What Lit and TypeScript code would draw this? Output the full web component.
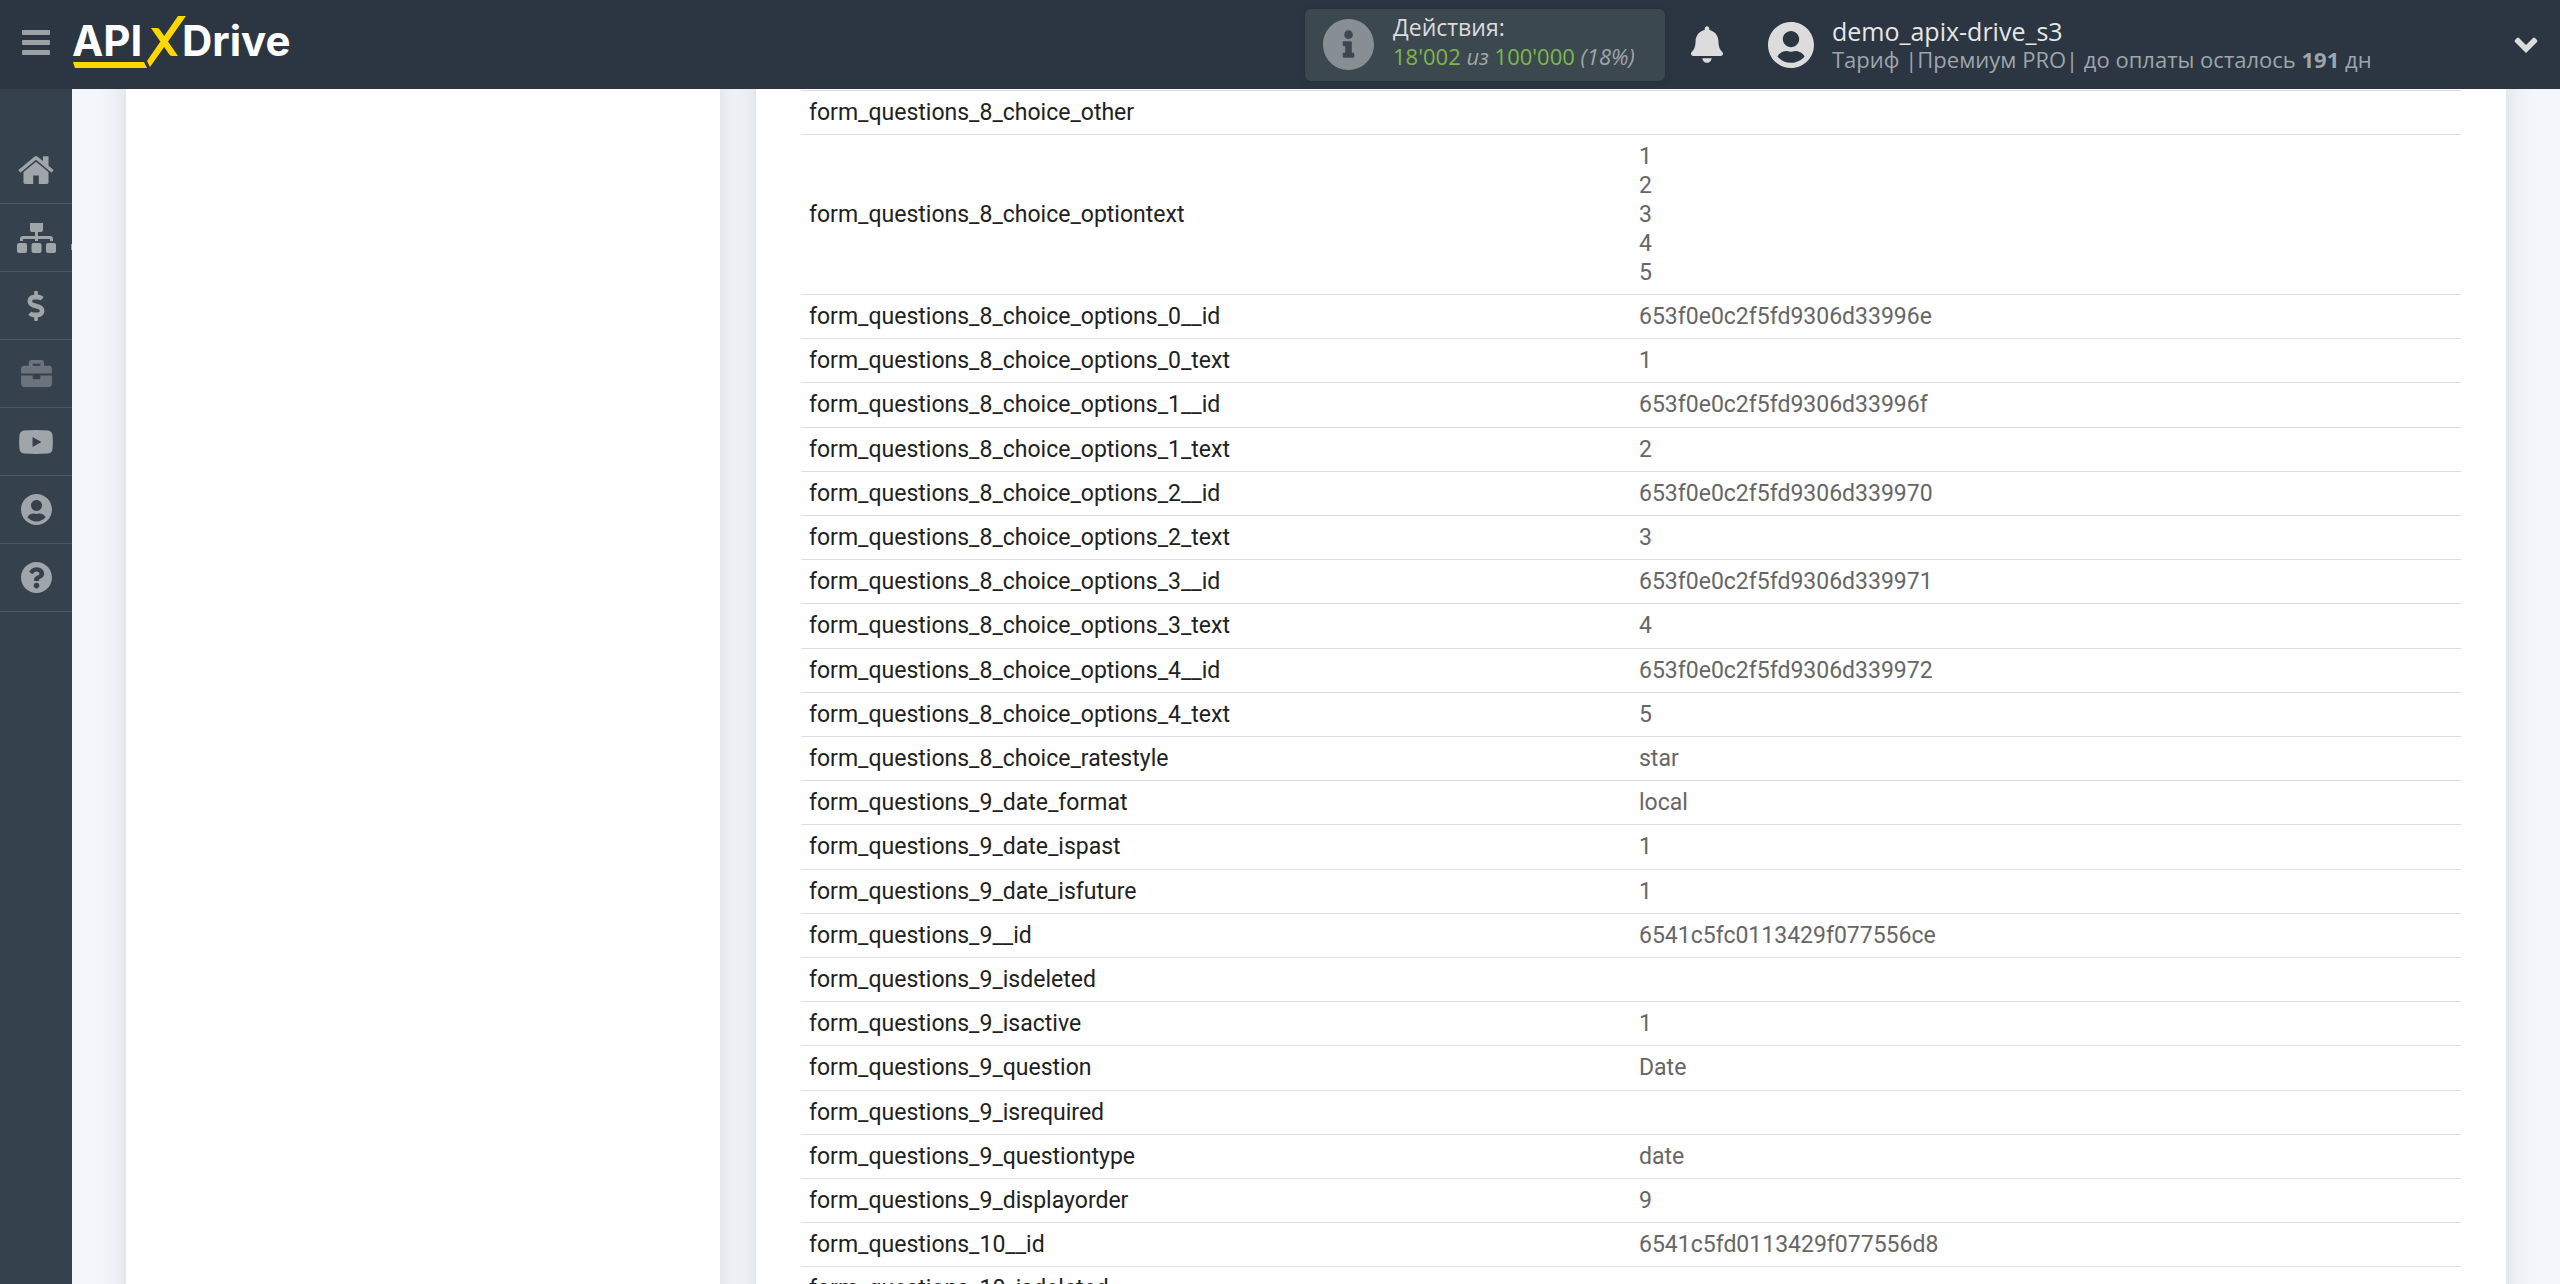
import { LitElement, html, css, svg, nothing } from "lit";
import { customElement } from "lit/decorators.js";

interface NavItem {
  label: string;
  icon: unknown;
  box: string;
  width: number;
  height: number;
  muted?: boolean;
  submenu?: boolean;
}

interface Field {
  name: string;
  value: string[];
}

const USER_PATH =
  "M248 8C111 8 0 119 0 256s111 248 248 248 248-111 248-248S385 8 248 8zm0 96c48.6 0 88 39.4 88 88s-39.4 88-88 88-88-39.4-88-88 39.4-88 88-88zm0 344c-58.7 0-111.3-26.6-146.5-68.2 18.8-35.4 55.6-59.8 98.5-59.8 2.4 0 4.8.4 7.1 1.1 13 4.2 26.6 6.9 40.9 6.9 14.3 0 28-2.7 40.9-6.9 2.3-.7 4.7-1.1 7.1-1.1 42.9 0 79.7 24.4 98.5 59.8C359.3 421.4 306.7 448 248 448z";

const NAV: NavItem[] = [
  {
    label: "Главная",
    box: "90 250 1612 1290",
    width: 36,
    height: 28,
    icon: svg`<path d="M1472 992v480q0 26-19 45t-45 19h-384v-384h-256v384h-384q-26 0-45-19t-19-45v-480q0-1 .5-3t.5-3l575-474 575 474q1 2 1 6zm223-69l-62 74q-8 9-21 11h-3q-13 0-21-7l-692-577-692 577q-12 8-24 7-13-2-21-11l-62-74q-8-10-7-23.5t11-21.5l719-599q32-26 76-26t76 26l244 204v-195q0-14 9-23t23-9h192q14 0 23 9t9 23v408l219 182q10 8 11 21.5t-7 23.5z"/>`,
  },
  {
    label: "Связи",
    box: "0 0 39 30",
    width: 39,
    height: 30,
    submenu: true,
    icon: svg`<path d="M13 0h13v7q0 2-2 2h-3v4h12q3 0 3 3v2h-3v-2H21v2h-3v-2H6v2H3v-2q0-3 3-3h12V9h-3q-2 0-2-2z"/><rect x="0" y="20" width="10" height="10" rx="2"/><rect x="14.500" y="20" width="10" height="10" rx="2"/><rect x="29" y="20" width="10" height="10" rx="2"/>`,
  },
  {
    label: "Оплата",
    box: "0 0 288 512",
    width: 18,
    height: 30,
    icon: svg`<path d="M209.200 233.400l-108-31.600C88.700 198.200 80 186.500 80 173.500c0-16.300 13.200-29.500 29.500-29.500h66.300c12.200 0 24.200 3.700 34.200 10.500 6.100 4.100 14.300 3.100 19.500-2l34.800-34c7.100-6.900 6.100-18.400-1.800-24.500C238 74.800 207.400 64.100 176 64V16c0-8.800-7.200-16-16-16h-32c-8.800 0-16 7.200-16 16v48h-2.500C45.800 64-5.400 118.700.5 183.600c4.200 46.100 39.400 83.600 83.800 96.600l102.500 30c12.500 3.700 21.200 15.300 21.200 28.300 0 16.300-13.200 29.500-29.500 29.500h-66.300C100 368 88 364.300 78 357.500c-6.100-4.100-14.300-3.100-19.500 2l-34.800 34c-7.100 6.900-6.100 18.400 1.800 24.500 24.500 19.200 55.100 29.900 86.500 30v48c0 8.800 7.200 16 16 16h32c8.800 0 16-7.200 16-16v-48.200c46.600-.9 90.300-28.600 105.700-72.700 21.500-61.600-14.600-124.800-72.500-141.700z"/>`,
  },
  {
    label: "Проекты",
    box: "0 32 512 448",
    width: 31,
    height: 27,
    muted: true,
    icon: svg`<path d="M320 336c0 8.840-7.160 16-16 16h-96c-8.840 0-16-7.160-16-16v-48H0v144c0 25.600 22.400 48 48 48h416c25.600 0 48-22.400 48-48V288H320v48zm144-208h-80V80c0-25.600-22.400-48-48-48H176c-25.600 0-48 22.400-48 48v48H48c-25.600 0-48 22.400-48 48v80h512v-80c0-25.600-22.400-48-48-48zm-144 0H192V96h128v32z"/>`,
  },
  {
    label: "Видео",
    box: "0 0 34 24",
    width: 34,
    height: 24,
    icon: svg`<path fill-rule="evenodd" d="M5 .5Q17-.5 29 .5Q33 1 33.500 5Q34.200 12 33.500 19Q33 23 29 23.500Q17 24.300 5 23.500Q1 23 .5 19Q-.2 12 .5 5Q1 1 5 .5zM13.500 7v10l9-5z"/>`,
  },
  {
    label: "Профиль",
    box: "0 8 496 496",
    width: 31,
    height: 31,
    icon: svg`<path d=${USER_PATH} />`,
  },
  {
    label: "Помощь",
    box: "8 8 496 496",
    width: 31,
    height: 31,
    icon: svg`<path d="M504 256c0 136.997-111.043 248-248 248S8 392.997 8 256C8 119.083 119.043 8 256 8s248 111.083 248 248zM262.655 90c-54.497 0-89.255 22.957-116.549 63.758-3.536 5.286-2.353 12.415 2.715 16.258l34.699 26.310c5.205 3.947 12.621 3.008 16.665-2.122 17.864-22.658 30.113-35.797 57.303-35.797 20.429 0 45.698 13.148 45.698 32.958 0 14.976-12.363 22.667-32.534 33.976C247.128 238.528 216 254.941 216 296v4c0 6.627 5.373 12 12 12h56c6.627 0 12-5.373 12-12v-1.333c0-28.462 83.186-29.647 83.186-106.667 0-58.002-60.165-102-116.531-102zM256 338c-25.365 0-46 20.635-46 46 0 25.364 20.635 46 46 46s46-20.636 46-46c0-25.365-20.635-46-46-46z"/>`,
  },
];

const field = (name: string, ...value: string[]): Field => ({ name: `form_questions_${name}`, value });

const FIELDS: Field[] = [
  field("8_choice_other"),
  field("8_choice_optiontext", "1", "2", "3", "4", "5"),
  field("8_choice_options_0__id", "653f0e0c2f5fd9306d33996e"),
  field("8_choice_options_0_text", "1"),
  field("8_choice_options_1__id", "653f0e0c2f5fd9306d33996f"),
  field("8_choice_options_1_text", "2"),
  field("8_choice_options_2__id", "653f0e0c2f5fd9306d339970"),
  field("8_choice_options_2_text", "3"),
  field("8_choice_options_3__id", "653f0e0c2f5fd9306d339971"),
  field("8_choice_options_3_text", "4"),
  field("8_choice_options_4__id", "653f0e0c2f5fd9306d339972"),
  field("8_choice_options_4_text", "5"),
  field("8_choice_ratestyle", "star"),
  field("9_date_format", "local"),
  field("9_date_ispast", "1"),
  field("9_date_isfuture", "1"),
  field("9__id", "6541c5fc0113429f077556ce"),
  field("9_isdeleted"),
  field("9_isactive", "1"),
  field("9_question", "Date"),
  field("9_isrequired"),
  field("9_questiontype", "date"),
  field("9_displayorder", "9"),
  field("10__id", "6541c5fd0113429f077556d8"),
  field("10_isdeleted"),
];

@customElement("app-header")
export class AppHeader extends LitElement {
  static styles = css`
    :host {
      display: flex;
      align-items: center;
      height: 89px;
      padding: 0 20px;
      box-sizing: border-box;
      background: #2b3642;
      color: #dcdcdc;
      font-family: "Open Sans", "Noto Sans", sans-serif;
      font-size: 22px;
      line-height: 28px;
    }
    svg {
      display: block;
      fill: currentColor;
    }
    button {
      display: block;
      padding: 0;
      border: 0;
      background: none;
      color: inherit;
      font: inherit;
      text-align: left;
      cursor: pointer;
    }
    .brand {
      display: flex;
      align-items: center;
      gap: 20px;
      padding-bottom: 5px;
    }
    .menu {
      padding: 0 2px;
      color: #9ba1a6;
    }
    .logo-text {
      font-family: Inter, "Open Sans", sans-serif;
      font-size: 42px;
      font-weight: 700;
      fill: #fff;
    }
    .logo-mark {
      fill: #ffd800;
    }
    .right {
      display: flex;
      align-items: center;
      flex: 0 1 1233px;
      margin-left: auto;
      padding-right: 2px;
      white-space: nowrap;
    }
    .usage {
      display: flex;
      align-items: center;
      gap: 19px;
      width: 360px;
      height: 72px;
      padding: 0 18px;
      box-sizing: border-box;
      border-radius: 6px;
      background: #3c4850;
      box-shadow: 0 0 8px rgba(0, 0, 0, 0.12);
    }
    .usage-icon {
      color: #878e94;
    }
    .usage-text {
      padding-bottom: 5px;
      line-height: 29px;
    }
    .usage-title {
      font-size: 23px;
    }
    .usage-numbers {
      color: #a0a5a9;
      font-style: italic;
    }
    .count {
      color: #7db84a;
      font-style: normal;
    }
    .bell {
      margin-left: 26px;
    }
    .account {
      display: flex;
      align-items: center;
      gap: 18px;
      margin-left: 45px;
    }
    .user {
      color: #e6e6e6;
      font-size: 25px;
    }
    .plan {
      color: #9fa5aa;
    }
    .expand {
      margin-left: auto;
    }
  `;

  render() {
    return html`
      <div class="brand">
        <button class="menu" aria-label="Меню">
          <svg width="28" height="25" viewBox="0 0 28 25">
            <rect width="28" height="5" rx="1" />
            <rect y="10" width="28" height="5" rx="1" />
            <rect y="20" width="28" height="5" rx="1" />
          </svg>
        </button>
        <a class="logo" href="#" aria-label="APIXDrive">
          <svg width="224" height="56" viewBox="72 14 224 56">
            <text class="logo-text" x="72" y="56">API</text>
            <text class="logo-text" x="182" y="56">Drive</text>
            <path
              class="logo-mark"
              d="M73 62h71l3 6H75zM178 16h8L150 67l-3-6zM151 28h6q2 0 3 2l18 26h-6q-2 0-3-2z"
            />
          </svg>
        </a>
      </div>
      <div class="right">
        <div class="usage">
          <svg class="usage-icon" width="51" height="51" viewBox="8 8 496 496">
            <path
              d="M256 8C119.043 8 8 119.083 8 256c0 136.997 111.043 248 248 248s248-111.003 248-248C504 119.083 392.957 8 256 8zm0 110c23.196 0 42 18.804 42 42s-18.804 42-42 42-42-18.804-42-42 18.804-42 42-42zm56 254c0 6.627-5.373 12-12 12h-88c-6.627 0-12-5.373-12-12v-24c0-6.627 5.373-12 12-12h12v-64h-12c-6.627 0-12-5.373-12-12v-24c0-6.627 5.373-12 12-12h64c6.627 0 12 5.373 12 12v100h12c6.627 0 12 5.373 12 12v24z"
            />
          </svg>
          <div class="usage-text">
            <div class="usage-title">Действия:</div>
            <div class="usage-numbers">
              <span class="count">18'002</span> из <span class="count">100'000</span> (18%)
            </div>
          </div>
        </div>
        <button class="bell" aria-label="Уведомления">
          <svg width="32" height="37" viewBox="0 0 448 512">
            <path
              d="M224 512c35.320 0 63.970-28.650 63.970-64H160.030c0 35.350 28.650 64 63.970 64zm215.390-149.710c-19.320-20.760-55.470-51.990-55.470-154.290 0-77.700-54.480-139.900-127.940-155.160V32c0-17.670-14.320-32-31.980-32s-31.980 14.330-31.980 32v20.840C118.560 68.100 64.080 130.300 64.080 208c0 102.300-36.150 133.530-55.470 154.290-6 6.450-8.660 14.160-8.610 21.710.11 16.400 12.980 32 32.100 32h383.800c19.120 0 32-15.600 32.100-32 .05-7.550-2.610-15.270-8.610-21.710z"
            />
          </svg>
        </button>
        <button class="account">
          <svg width="46" height="46" viewBox="0 8 496 496"><path d=${USER_PATH} /></svg>
          <div>
            <div class="user">demo_apix-drive_s3</div>
            <div class="plan">Тариф |Премиум PRO| до оплаты осталось <b>191</b> дн</div>
          </div>
        </button>
        <button class="expand" aria-label="Развернуть">
          <svg width="24" height="16" viewBox="0 0 24 16">
            <path d="M12 16L1 5Q0 4 1 3L3 1Q4 0 5 1L12 8L19 1Q20 0 21 1L23 3Q24 4 23 5z" />
          </svg>
        </button>
      </div>
    `;
  }
}

@customElement("app-sidebar")
export class AppSidebar extends LitElement {
  static styles = css`
    :host {
      display: block;
      width: 72px;
      padding-top: 47px;
      box-sizing: border-box;
      background: #36414e;
    }
    .item {
      position: relative;
      display: flex;
      align-items: center;
      justify-content: center;
      height: 68px;
      box-sizing: border-box;
      border-bottom: 1px solid #4b5763;
      color: #a0a5a9;
    }
    .muted {
      color: #6b747d;
    }
    .icon {
      display: block;
      fill: currentColor;
    }
    .more {
      position: absolute;
      right: 0;
      top: 40px;
      width: 1px;
      height: 6px;
      background: #a0a5a9;
    }
  `;

  render() {
    return html`<nav>
      ${NAV.map(
        (item) => html`<a class="item ${item.muted ? "muted" : ""}" href="#" aria-label=${item.label}>
          <svg class="icon" width=${item.width} height=${item.height} viewBox=${item.box}>${item.icon}</svg>
          ${item.submenu ? html`<span class="more"></span>` : nothing}
        </a>`
      )}
    </nav>`;
  }
}

@customElement("field-table")
export class FieldTable extends LitElement {
  static styles = css`
    :host {
      display: block;
      font-family: Roboto, sans-serif;
      font-size: 23px;
      line-height: 29px;
    }
    table {
      width: 100%;
      table-layout: fixed;
      border-collapse: separate;
      border-spacing: 0;
      border-top: 1px solid #dedede;
    }
    th,
    td {
      padding: 7px 8px;
      border-bottom: 1px solid #dedede;
      color: #666;
      font-weight: 400;
      text-align: left;
      vertical-align: middle;
    }
    th {
      color: #212121;
    }
    tr:nth-child(5n) > * {
      padding-bottom: 8px;
    }
  `;

  render() {
    return html`<table>
      <tbody>
        ${FIELDS.map(
          (f) => html`<tr>
            <th scope="row">${f.name}</th>
            <td>${f.value.map((line) => html`<div>${line}</div>`)}</td>
          </tr>`
        )}
      </tbody>
    </table>`;
  }
}

@customElement("app-root")
export class AppRoot extends LitElement {
  static styles = css`
    :host {
      display: grid;
      grid-template: auto minmax(0, 1fr) / auto minmax(0, 1fr);
      height: 100vh;
      overflow: hidden;
      background: #f3f7fc;
    }
    .header {
      grid-column: 1 / -1;
    }
    .workspace {
      overflow: hidden;
    }
    /* The cards run on above and below the visible area. */
    .cards {
      display: grid;
      grid-template-columns: minmax(0, 594fr) minmax(0, 1750fr);
      gap: 36px;
      margin-top: -48px;
      padding: 0 54px;
    }
    .card {
      padding: 49px 45px 48px;
      background: #fff;
      box-shadow: 0 0 28px rgba(0, 0, 0, 0.12);
    }
  `;

  render() {
    return html`
      <app-header class="header"></app-header>
      <app-sidebar></app-sidebar>
      <main class="workspace">
        <div class="cards">
          <section class="card"></section>
          <section class="card"><field-table></field-table></section>
        </div>
      </main>
    `;
  }
}
